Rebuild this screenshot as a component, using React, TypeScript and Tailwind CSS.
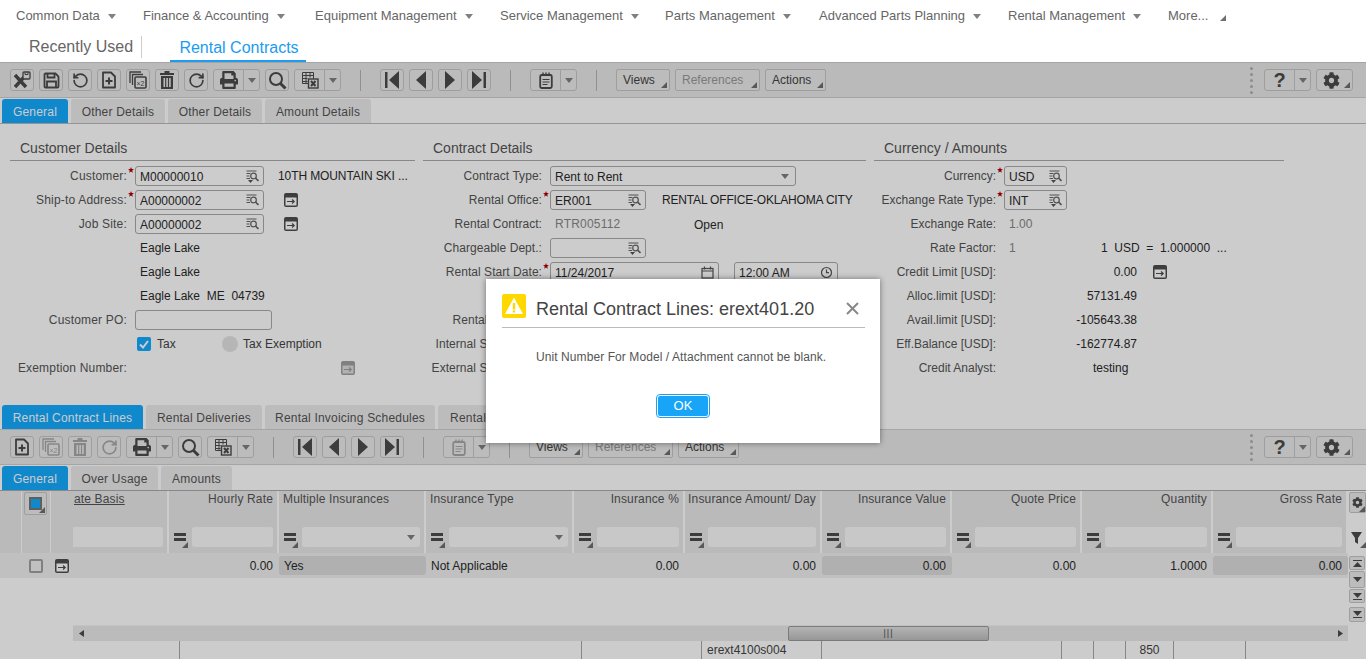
import { ReactNode } from "react";
import { FaCog, FaPrint } from "react-icons/fa";
import { RotateCcw, RotateCw } from "lucide-react";

const Corner = ({ className = "right-[2px] bottom-[2px]" }: { className?: string }) => (
    <svg width="6" height="6" viewBox="0 0 6 6" className={`absolute ${className}`}>
        <polygon points="6,0 6,6 0,6" fill="#6e6e6e" />
    </svg>
);

const Caret = () => (
    <svg width="8" height="5" viewBox="0 0 8 5" className="shrink-0">
        <polygon points="0,0 8,0 4,5" fill="#808080" />
    </svg>
);

const SaveX = () => (
    <svg width="18" height="18" viewBox="0 0 18 18" fill="none" stroke="currentColor">
        <path d="M2 4 13 16M13 4 2 16" strokeWidth="3.4" />
        <rect x="10" y="1" width="7" height="7" rx="1" fill="#e9e9e9" strokeWidth="1.3" />
        <path d="M12 1.5v2h3v-2" strokeWidth="1" />
    </svg>
);

const Save = () => (
    <svg width="17" height="17" viewBox="0 0 17 17" fill="none" stroke="currentColor" strokeWidth="1.8">
        <path d="M1.5 2.5a1 1 0 0 1 1-1h10l3 3v10a1 1 0 0 1-1 1h-12a1 1 0 0 1-1-1z" />
        <path d="M4.5 1.5v4h7v-4M4 15.5v-6h9v6" />
    </svg>
);

const NewDoc = () => (
    <svg width="16" height="18" viewBox="0 0 16 18" fill="none" stroke="currentColor" strokeWidth="1.8">
        <path d="M2 1.5h8l4 4v11H2z" strokeLinejoin="round" />
        <path d="M8 6.5v7M4.5 10h7" strokeWidth="2" />
    </svg>
);

const Dup = () => (
    <svg width="18" height="18" viewBox="0 0 18 18" fill="none" stroke="currentColor" strokeWidth="1.3">
        <path d="M1 12V1h11" />
        <path d="M3.5 14V3.5H14" />
        <rect x="6" y="6" width="11" height="11" rx="1" strokeWidth="1.6" />
        <text x="7.5" y="14.5" fontSize="7" fill="currentColor" stroke="none" fontFamily="Liberation Sans, sans-serif">×2</text>
    </svg>
);

const Trash = () => (
    <svg width="16" height="18" viewBox="0 0 16 18" fill="currentColor">
        <path d="M5.5 0h5v2H15v2H1V2h4.5z" />
        <path fillRule="evenodd" d="M2 5h12v13H2zM4.5 7v9h1.6V7zm2.8 0v9h1.6V7zm2.8 0v9h1.6V7z" />
    </svg>
);

const Search = () => (
    <svg width="19" height="19" viewBox="0 0 19 19" fill="none" stroke="currentColor">
        <circle cx="8" cy="8" r="6" strokeWidth="2" />
        <path d="M12.5 12.5 17.5 17.5" strokeWidth="3" />
    </svg>
);

const ExportX = () => (
    <svg width="18" height="18" viewBox="0 0 18 18" fill="none" stroke="currentColor" strokeWidth="1">
        <path d="M1.5 1.5h11v11h-11zM1.5 4.5h11M1.5 7.5h5M1.5 10.5h5M5 1.5v11M9 1.5v5" />
        <rect x="7.5" y="8" width="9.5" height="9" fill="#ececec" strokeWidth="1.4" />
        <path d="M10 10 14.5 15M14.5 10 10 15" strokeWidth="2" />
    </svg>
);

const First = () => (
    <svg width="16" height="18" viewBox="0 0 16 18" fill="currentColor"><rect x="1" y="1" width="2.5" height="16" /><polygon points="15,0 15,18 5,9" /></svg>
);
const Prev = () => (
    <svg width="12" height="18" viewBox="0 0 12 18" fill="currentColor"><polygon points="11,0 11,18 1,9" /></svg>
);
const Next = () => (
    <svg width="12" height="18" viewBox="0 0 12 18" fill="currentColor"><polygon points="1,0 1,18 11,9" /></svg>
);
const Last = () => (
    <svg width="16" height="18" viewBox="0 0 16 18" fill="currentColor"><polygon points="1,0 1,18 11,9" /><rect x="12.5" y="1" width="2.5" height="16" /></svg>
);

const Note = () => (
    <svg width="14" height="17" viewBox="0 0 14 17" fill="none" stroke="currentColor">
        <rect x="1.2" y="3" width="11.6" height="13" rx="1.5" strokeWidth="1.8" />
        <path d="M4 0.5v3M7 0.5v3M10 0.5v3" strokeWidth="1.4" />
        <path d="M3.5 7.5h7M3.5 10h7M3.5 12.5h5" strokeWidth="1.2" />
    </svg>
);

const Lookup = ({ pick }: { pick?: boolean }) => (
    <svg width="13" height="13" viewBox="0 0 13 13" fill="none" stroke="#666" className="shrink-0">
        <path d="M0.5 1h10M0.5 3.5h4M0.5 6h3M0.5 8.5h3.5" strokeWidth="1" />
        <circle cx="7.5" cy="6" r="2.8" strokeWidth="1.2" />
        <path d="M9.5 8 12.5 11" strokeWidth="1.7" />
        {pick && <polygon points="2,10 7,10 4.5,13" fill="#555" stroke="none" />}
    </svg>
);

const LinkIcon = ({ off }: { off?: boolean }) => (
    <svg width="14" height="14" viewBox="0 0 14 14" className="shrink-0">
        <rect width="14" height="14" rx="2" fill={off ? "#a0a0a0" : "#4e4e4e"} />
        <rect x="1.5" y="4.5" width="11" height="8" fill={off ? "#dedede" : "#fff"} />
        <path d="M3 8.5h7M8 6.5l2.2 2-2.2 2" fill="none" stroke={off ? "#a0a0a0" : "#4e4e4e"} strokeWidth="1.2" />
    </svg>
);

const Star = () => (
    <svg width="6" height="6" viewBox="0 0 10 10" className="absolute left-[1px] top-[3px]">
        <polygon points="5,0 6.3,3.4 10,3.6 7.1,5.9 8.1,9.6 5,7.5 1.9,9.6 2.9,5.9 0,3.6 3.7,3.4" fill="#b30000" />
    </svg>
);

const Btn = ({ children, off }: { children: ReactNode; off?: boolean }) => (
    <button className={`flex h-[22px] w-[24px] shrink-0 items-center justify-center rounded-[3px] border border-[#c6c6c6] bg-[#ececec] ${off ? "text-[#a8a8a8]" : "text-[#4c4c4c]"}`}>
        {children}
    </button>
);

const SplitBtn = ({ children, off }: { children: ReactNode; off?: boolean }) => (
    <div className={`flex h-[22px] w-[47px] shrink-0 rounded-[3px] border border-[#c6c6c6] bg-[#ececec] ${off ? "text-[#a8a8a8]" : "text-[#4c4c4c]"}`}>
        <span className="flex w-[30px] items-center justify-center border-r border-[#c6c6c6]">{children}</span>
        <span className="flex flex-1 items-center justify-center"><Caret /></span>
    </div>
);

const TextBtn = ({ label, width, off }: { label: string; width: string; off?: boolean }) => (
    <button className={`relative h-[22px] ${width} shrink-0 rounded-[2px] border border-[#c6c6c6] bg-[#ececec] pl-[6px] pr-[10px] text-left text-[12px] ${off ? "text-[#999]" : "text-[#444]"}`}>
        {label}
        <Corner />
    </button>
);

const Sep = () => <span className="mx-[14px] h-[21px] w-px shrink-0 bg-[#b4b4b4]" />;

const Toolbar = ({ lower }: { lower?: boolean }) => (
    <div className="flex h-[36px] items-center gap-[5px] border-y border-[#cfcfcf] bg-[#e9e9e9] pl-[10px] pr-[13px]">
        {!lower && <Btn><SaveX /></Btn>}
        {!lower && <Btn><Save /></Btn>}
        {!lower && <Btn><RotateCcw size={17} strokeWidth={2.4} /></Btn>}
        <Btn><NewDoc /></Btn>
        <Btn off={lower}><Dup /></Btn>
        <Btn off={lower}><Trash /></Btn>
        <Btn off={lower}><RotateCw size={17} strokeWidth={2.4} /></Btn>
        <SplitBtn><FaPrint size={18} /></SplitBtn>
        <Btn><Search /></Btn>
        <SplitBtn><ExportX /></SplitBtn>
        <Sep />
        <Btn><First /></Btn>
        <Btn><Prev /></Btn>
        <Btn><Next /></Btn>
        <Btn><Last /></Btn>
        <Sep />
        <SplitBtn off={lower}><Note /></SplitBtn>
        <Sep />
        <TextBtn label="Views" width="w-[54px]" />
        <TextBtn label="References" width="w-[85px]" off />
        <TextBtn label="Actions" width="w-[61px]" />
        <div className="ml-auto mr-[6px] flex flex-col gap-[3px]">
            {[0, 1, 2, 3, 4].map((i) => <span key={i} className="h-[3px] w-[3px] rounded-full bg-[#b0b0b0]" />)}
        </div>
        <div className="flex h-[22px] w-[47px] rounded-[3px] border border-[#c6c6c6] bg-[#ececec]">
            <span className="flex w-[30px] items-center justify-center border-r border-[#c6c6c6] text-[20px] font-bold text-[#4c4c4c]">?</span>
            <span className="flex flex-1 items-center justify-center"><Caret /></span>
        </div>
        <button className="relative flex h-[22px] w-[37px] items-center rounded-[3px] border border-[#c6c6c6] bg-[#ececec] pl-[6px] text-[#4c4c4c]">
            <FaCog size={17} />
            <Corner />
        </button>
    </div>
);

const Tab = ({ label, width, active }: { label: string; width: string; active?: boolean }) => (
    <div className={`flex h-[24px] ${width} shrink-0 items-center justify-center rounded-t-[3px] pt-[1px] text-[12px] tracking-[0.2px] ${active ? "bg-[#13aaff] text-white" : "bg-[#ebebeb] text-[#555]"}`}>
        {label}
    </div>
);

const Field = ({ value, width, pick, icon }: { value?: string; width: string; pick?: boolean; icon?: ReactNode }) => (
    <div className={`flex h-[20px] ${width} shrink-0 items-center justify-between rounded-[3px] border border-[#aaa] pl-[4px] pr-[4px] text-[12px] text-[#2a2a2a]`}>
        <span className="pt-[1px]">{value}</span>
        {icon ?? <Lookup pick={pick} />}
    </div>
);

const Row = ({ label, labelWidth, req, children }: { label?: string; labelWidth: string; req?: boolean; children?: ReactNode }) => (
    <div className="flex h-[24px] items-center text-[12px] text-[#2a2a2a]">
        <span className={`${labelWidth} shrink-0 whitespace-nowrap text-right text-[#555]`}>{label}</span>
        <span className="relative h-full w-[8px] shrink-0">{req && <Star />}</span>
        {children}
    </div>
);

const Section = ({ title, width, children }: { title: string; width: string; children: ReactNode }) => (
    <div className={`${width} shrink-0`}>
        <div className="mb-[3px] flex h-[25px] items-center border-b border-[#aaa] pl-[10px] text-[14px] text-[#555]">{title}</div>
        {children}
    </div>
);

const Calendar = () => (
    <svg width="13" height="13" viewBox="0 0 13 13" fill="none" stroke="#555" strokeWidth="1.2" className="shrink-0">
        <rect x="1" y="2.5" width="11" height="9.5" />
        <path d="M1 5h11M3.5 0.5v3M9.5 0.5v3" />
    </svg>
);

const Clock = () => (
    <svg width="13" height="13" viewBox="0 0 13 13" fill="none" stroke="#555" strokeWidth="1.2" className="shrink-0">
        <circle cx="6.5" cy="6.5" r="5" />
        <path d="M6.5 3.5v3.2h2.5" />
    </svg>
);

const CUST = "w-[117px] tracking-[0.18px]";
const CONT = "w-[119px] tracking-[0.05px]";
const CURR = "w-[122px]";

const menuItems = [
    { label: "Common Data", width: "w-[127px]" },
    { label: "Finance & Accounting", width: "w-[172px]" },
    { label: "Equipment Management", width: "w-[185px]" },
    { label: "Service Management", width: "w-[165px]" },
    { label: "Parts Management", width: "w-[154px]" },
    { label: "Advanced Parts Planning", width: "w-[189px]" },
    { label: "Rental Management", width: "w-[160px]" },
];

const columns = [
    { title: "ate Basis", width: "w-[96px]", value: "" },
    { title: "Hourly Rate", width: "w-[110px]", value: "0.00", right: true },
    { title: "Multiple Insurances", width: "w-[147px]", value: "Yes", select: true, shaded: true },
    { title: "Insurance Type", width: "w-[148px]", value: "Not Applicable", select: true },
    { title: "Insurance %", width: "w-[111px]", value: "0.00", right: true },
    { title: "Insurance Amount/ Day", width: "w-[137px]", value: "0.00", right: true },
    { title: "Insurance Value", width: "w-[130px]", value: "0.00", right: true, shaded: true },
    { title: "Quote Price", width: "w-[130px]", value: "0.00", right: true },
    { title: "Quantity", width: "w-[131px]", value: "1.0000", right: true },
    { title: "Gross Rate", width: "w-[135px]", value: "0.00", right: true, shaded: true },
];

const footerCells = [
    { width: "w-[180px]", text: "" },
    { width: "w-[402px]", text: "" },
    { width: "w-[120px]", text: "" },
    { width: "w-[120px]", text: "erext4100s004" },
    { width: "w-[240px]", text: "" },
    { width: "w-[32px]", text: "" },
    { width: "w-[32px]", text: "" },
    { width: "w-[48px]", text: "850", center: true },
    { width: "w-[72px]", text: "" },
];

const RailBtn = ({ height, up, down, bar }: { height: string; up?: boolean; down?: boolean; bar?: boolean }) => (
    <div className={`flex ${height} w-[16px] flex-col items-center justify-center gap-[1px] rounded-[2px] border border-[#c6c6c6] bg-[#ececec]`}>
        {up && bar && <span className="h-[1px] w-[9px] bg-[#4c4c4c]" />}
        {up && <svg width="9" height="5" viewBox="0 0 9 5"><polygon points="4.5,0 9,5 0,5" fill="#4c4c4c" /></svg>}
        {down && <svg width="9" height="5" viewBox="0 0 9 5"><polygon points="0,0 9,0 4.5,5" fill="#4c4c4c" /></svg>}
        {down && bar && <span className="h-[1px] w-[9px] bg-[#4c4c4c]" />}
    </div>
);

export default function App() {
    return (
        <div className="relative h-[659px] w-[1366px] overflow-hidden bg-white font-['Liberation_Sans',Arial,sans-serif]">
            <nav className="flex h-[32px] items-center pl-[16px] text-[13px] text-[#666]">
                {menuItems.map((item) => (
                    <div key={item.label} className={`flex ${item.width} shrink-0 items-center`}>
                        <span>{item.label}</span>
                        <span className="ml-[8px]"><Caret /></span>
                    </div>
                ))}
                <div className="relative flex w-[58px] items-center">
                    <span>More...</span>
                    <Corner className="right-0 bottom-[5px]" />
                </div>
            </nav>
            <div className="flex h-[30px] items-start pl-[29px] text-[16px]">
                <span className="mt-[4px] flex h-[22px] w-[113px] items-center border-r border-[#ccc] text-[#666]">Recently Used</span>
                <span className="ml-[28px] flex h-[30px] w-[136px] items-center justify-center border-b-2 border-[#1a9cf0] pl-[2px] pt-[4px] text-[#1a9cf0]">Rental Contracts</span>
            </div>

            <Toolbar />
            <div className="flex gap-[3px] border-b border-[#bbb] pl-[2px] pt-[1px]">
                <Tab label="General" width="w-[66px]" active />
                <Tab label="Other Details" width="w-[94px]" />
                <Tab label="Other Details" width="w-[94px]" />
                <Tab label="Amount Details" width="w-[106px]" />
            </div>

            <div className="flex h-[281px] gap-[8px] px-[10px] pt-[12px]">
                <Section title="Customer Details" width="w-[405px]">
                    <Row label="Customer:" labelWidth={CUST} req>
                        <Field value="M00000010" width="w-[129px]" pick />
                        <span className="ml-[14px] tracking-[-0.1px]">10TH MOUNTAIN SKI ...</span>
                    </Row>
                    <Row label="Ship-to Address:" labelWidth={CUST} req>
                        <Field value="A00000002" width="w-[129px]" />
                        <span className="ml-[20px]"><LinkIcon /></span>
                    </Row>
                    <Row label="Job Site:" labelWidth={CUST}>
                        <Field value="A00000002" width="w-[129px]" />
                        <span className="ml-[20px]"><LinkIcon /></span>
                    </Row>
                    <Row labelWidth={CUST}><span className="pl-[5px]">Eagle Lake</span></Row>
                    <Row labelWidth={CUST}><span className="pl-[5px]">Eagle Lake</span></Row>
                    <Row labelWidth={CUST}><span className="whitespace-pre pl-[5px]">Eagle Lake  ME  04739</span></Row>
                    <Row label="Customer PO:" labelWidth={CUST}>
                        <div className="h-[20px] w-[137px] rounded-[3px] border border-[#aaa]" />
                    </Row>
                    <Row labelWidth={CUST}>
                        <span className="ml-[2px] flex h-[14px] w-[14px] items-center justify-center rounded-[2px] bg-[#13aaff]">
                            <svg width="10" height="9" viewBox="0 0 10 9" fill="none" stroke="#fff" strokeWidth="2"><path d="M1 4.5 4 7.5 9 1" /></svg>
                        </span>
                        <span className="ml-[6px] w-[20px] text-[#444]">Tax</span>
                        <span className="ml-[45px] h-[16px] w-[16px] rounded-full bg-[#e4e4e4]" />
                        <span className="ml-[5px] text-[#444]">Tax Exemption</span>
                    </Row>
                    <Row label="Exemption Number:" labelWidth={CUST}>
                        <span className="ml-[206px]"><LinkIcon off /></span>
                    </Row>
                </Section>

                <Section title="Contract Details" width="w-[443px]">
                    <Row label="Contract Type:" labelWidth={CONT}>
                        <Field value="Rent to Rent" width="w-[246px]" icon={<span className="mr-[2px]"><Caret /></span>} />
                    </Row>
                    <Row label="Rental Office:" labelWidth={CONT} req>
                        <Field value="ER001" width="w-[96px]" pick />
                        <span className="ml-[16px] whitespace-nowrap tracking-[-0.18px]">RENTAL OFFICE-OKLAHOMA CITY</span>
                    </Row>
                    <Row label="Rental Contract:" labelWidth={CONT}>
                        <span className="w-[144px] pl-[5px] tracking-[0.2px] text-[#888]">RTR005112</span>
                        <span className="pt-[2px]">Open</span>
                    </Row>
                    <Row label="Chargeable Dept.:" labelWidth={CONT}>
                        <Field width="w-[96px]" pick />
                    </Row>
                    <Row label="Rental Start Date:" labelWidth={CONT} req>
                        <Field value="11/24/2017" width="w-[169px]" icon={<Calendar />} />
                        <span className="ml-[15px]"><Field value="12:00 AM" width="w-[104px]" icon={<Clock />} /></span>
                    </Row>
                    <Row labelWidth={CONT} />
                    <Row label="Rental Manager:" labelWidth={CONT} />
                    <Row label="Internal Sales Rep.:" labelWidth={CONT} />
                    <Row label="External Sales Rep.:" labelWidth={CONT} />
                </Section>

                <Section title="Currency / Amounts" width="w-[410px]">
                    <Row label="Currency:" labelWidth={CURR} req>
                        <Field value="USD" width="w-[63px]" pick />
                    </Row>
                    <Row label="Exchange Rate Type:" labelWidth={CURR} req>
                        <Field value="INT" width="w-[63px]" pick />
                    </Row>
                    <Row label="Exchange Rate:" labelWidth={CURR}>
                        <span className="pl-[5px] text-[#888]">1.00</span>
                    </Row>
                    <Row label="Rate Factor:" labelWidth={CURR}>
                        <span className="w-[97px] pl-[5px] text-[#888]">1</span>
                        <span className="whitespace-pre">1  USD  =  1.000000  ...</span>
                    </Row>
                    <Row label="Credit Limit [USD]:" labelWidth={CURR}>
                        <span className="w-[133px] text-right">0.00</span>
                        <span className="ml-[16px]"><LinkIcon /></span>
                    </Row>
                    <Row label="Alloc.limit [USD]:" labelWidth={CURR}><span className="w-[133px] text-right">57131.49</span></Row>
                    <Row label="Avail.limit [USD]:" labelWidth={CURR}><span className="w-[133px] text-right">-105643.38</span></Row>
                    <Row label="Eff.Balance [USD]:" labelWidth={CURR}><span className="w-[133px] text-right">-162774.87</span></Row>
                    <Row label="Credit Analyst:" labelWidth={CURR}><span className="pl-[89px]">testing</span></Row>
                </Section>
            </div>

            <div className="flex gap-[3px] pl-[2px]">
                <Tab label="Rental Contract Lines" width="w-[141px]" active />
                <Tab label="Rental Deliveries" width="w-[116px]" />
                <Tab label="Rental Invoicing Schedules" width="w-[170px]" />
                <Tab label="Rental Notes" width="w-[96px]" />
            </div>
            <Toolbar lower />
            <div className="flex gap-[3px] border-b border-[#aaa] pl-[2px] pt-[1px]">
                <Tab label="General" width="w-[66px]" active />
                <Tab label="Over Usage" width="w-[87px]" />
                <Tab label="Amounts" width="w-[71px]" />
            </div>

            <div className="flex h-[134px]">
                <div className="w-[1348px] shrink-0">
                    <div className="flex h-[62px] bg-[#e9e9e9] text-[12px] text-[#555]">
                        <div className="flex w-[73px] shrink-0">
                            <div className="w-[22px] border-r border-white" />
                            <div className="w-[29px] border-r border-white pl-[2px] pt-[1px]">
                                <div className="relative flex h-[23px] w-[23px] items-center justify-center rounded-[2px] border border-[#c6c6c6] bg-[#ececec]">
                                    <span className="h-[13px] w-[13px] border-2 border-[#777] bg-[#13aaff]" />
                                    <Corner className="right-[1px] bottom-[1px]" />
                                </div>
                            </div>
                        </div>
                        {columns.map((col, i) => (
                            <div key={col.title} className={`flex ${col.width} shrink-0 flex-col justify-between border-r-2 border-white pb-[6px] pt-[1px]`}>
                                <div className={`h-[14px] whitespace-nowrap leading-[14px] tracking-[0.15px] ${col.right ? "pr-[4px] text-right" : i === 0 ? "pl-[1px] underline" : "pl-[4px]"}`}>{col.title}</div>
                                <div className="flex items-end pr-[2px]">
                                    {i > 0 && (
                                        <span className="relative ml-[5px] mr-[6px] flex h-[20px] w-[12px] shrink-0 flex-col justify-center gap-[2px]">
                                            <span className="h-[3px] w-[12px] bg-[#4c4c4c]" />
                                            <span className="h-[3px] w-[12px] bg-[#4c4c4c]" />
                                            <Corner className="-right-[2px] -bottom-[1px]" />
                                        </span>
                                    )}
                                    <div className={`mr-[2px] flex h-[20px] flex-1 items-center justify-end rounded-[3px] bg-[#fbfbfb] pr-[5px] ${i === 0 ? "rounded-l-none" : ""}`}>
                                        {col.select && <Caret />}
                                    </div>
                                </div>
                            </div>
                        ))}
                    </div>
                    <div className="flex h-[25px] items-center bg-[#f0f0f0] text-[12px] text-[#2a2a2a]">
                        <div className="flex w-[73px] shrink-0 items-center pl-[29px]">
                            <span className="h-[14px] w-[14px] rounded-[2px] border-2 border-[#a0a0a0]" />
                            <span className="ml-[12px]"><LinkIcon /></span>
                        </div>
                        {columns.map((col) => (
                            <div key={col.title} className={`flex h-[19px] ${col.width} shrink-0 items-center rounded-[3px] pt-[1px] ${col.shaded ? "bg-[#dcdcdc]" : ""} ${col.right ? "justify-end pr-[6px]" : "pl-[5px]"}`}>
                                {col.value}
                            </div>
                        ))}
                    </div>
                </div>
                <div className="flex w-[18px] flex-col">
                    <div className="flex h-[62px] flex-col pl-[1px] pt-[1px] text-[#4c4c4c]">
                        <button className="relative flex h-[21px] w-[17px] items-center justify-center rounded-[2px] border border-[#c6c6c6] bg-[#ececec]">
                            <FaCog size={11} />
                            <Corner className="right-0 bottom-0" />
                        </button>
                        <div className="relative mt-[19px] h-[16px] w-[17px] pl-[2px]">
                            <svg width="11" height="12" viewBox="0 0 11 12" fill="currentColor"><polygon points="0,0 11,0 7,6 7,12 4,10 4,6" /></svg>
                            <Corner className="right-0 bottom-0" />
                        </div>
                    </div>
                    <div className="flex flex-col gap-[1px] pl-[1px] pt-[3px]">
                        <RailBtn height="h-[14px]" up bar />
                        <RailBtn height="h-[17px]" down />
                        <RailBtn height="h-[14px]" down bar />
                        <div className="mt-[3px]"><RailBtn height="h-[15px]" down bar /></div>
                    </div>
                </div>
            </div>

            <div className="ml-[73px] flex h-[16px] w-[1275px] items-center border-t border-[#f4f4f4] bg-[#eaeaea] text-[#4c4c4c]">
                <svg width="5" height="7" viewBox="0 0 5 7" className="ml-[6px]"><polygon points="5,0 5,7 0,3.5" fill="currentColor" /></svg>
                <div className="ml-[704px] flex h-[15px] w-[201px] items-center justify-center rounded-[2px] border border-[#999] bg-gradient-to-b from-[#e2e2e2] to-[#bdbdbd] text-[9px] leading-none">
                    <span className="tracking-[1px]">|||</span>
                </div>
                <svg width="5" height="7" viewBox="0 0 5 7" className="ml-auto mr-[5px]"><polygon points="0,0 0,7 5,3.5" fill="currentColor" /></svg>
            </div>
            <div className="flex h-[18px] text-[12px] text-[#444]">
                {footerCells.map((cell, i) => (
                    <div key={i} className={`${cell.width} shrink-0 border-r border-[#aaa] ${cell.center ? "text-center" : "pl-[5px]"}`}>{cell.text}</div>
                ))}
            </div>

            {/* dim everything under the tab bar while the dialog is open */}
            <div className="absolute inset-x-0 bottom-0 top-[62px] flex items-center justify-center bg-black/20">
                <div className="h-[164px] w-[394px] bg-white pl-[16px] pr-[15px] pt-[15px] shadow-[0_0_6px_rgba(0,0,0,0.45)]">
                    <div className="flex h-[34px] items-start border-b border-[#bbb]">
                        <svg width="24" height="24" viewBox="0 0 24 24" className="shrink-0">
                            <rect width="24" height="24" rx="2" fill="#ffd800" />
                            <polygon points="12,3.5 21,20 3,20" fill="#fff" />
                            <rect x="10.8" y="9" width="2.4" height="6.5" fill="#ffd800" />
                            <rect x="10.8" y="16.3" width="2.4" height="2.2" fill="#ffd800" />
                        </svg>
                        <span className="ml-[10px] h-[24px] text-[18px] leading-[30px] text-[#444]">Rental Contract Lines: erext401.20</span>
                        <svg width="13" height="13" viewBox="0 0 13 13" className="ml-auto mr-[6px] mt-[8px]" stroke="#888" strokeWidth="2"><path d="M1 1 12 12M12 1 1 12" /></svg>
                    </div>
                    <p className="ml-[34px] mt-[22px] h-[15px] text-[12px] leading-[15px] tracking-[0.08px] text-[#555]">Unit Number For Model / Attachment cannot be blank.</p>
                    <div className="mt-[30px] flex justify-center">
                        <button className="mr-[1px] h-[22px] w-[52px] rounded-[3px] border border-white bg-[#18a5f8] text-[13px] text-white outline outline-1 outline-[#18a5f8]">OK</button>
                    </div>
                </div>
            </div>
        </div>
    );
}
